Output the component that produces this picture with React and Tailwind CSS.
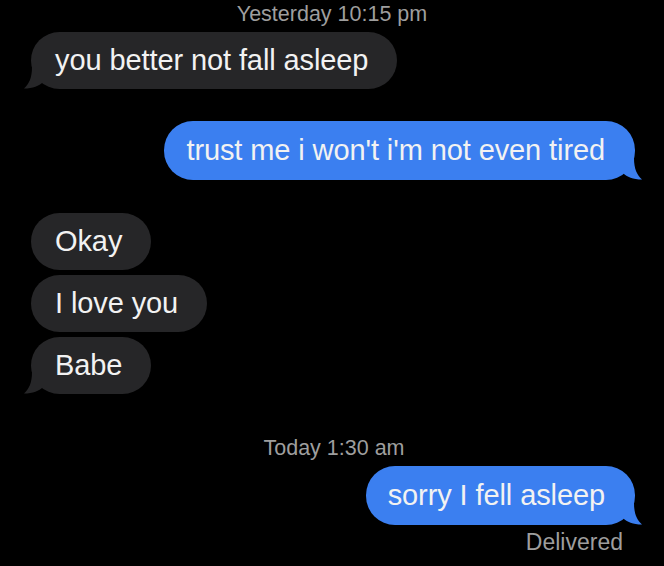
const font = { fontFamily: '"Liberation Sans", Arial, sans-serif' }

function TailLeft({ color }) {
  return (
    <svg className="absolute -left-[7px] bottom-0" width="22" height="22" viewBox="0 0 22 22">
      <path d="M8 0 C8 11 5 17 0 21.5 C9 21.5 15 19 19 15 L19 0 Z" fill={color} />
    </svg>
  )
}

function TailRight({ color }) {
  return (
    <svg className="absolute -right-[7px] bottom-0" width="22" height="22" viewBox="0 0 22 22">
      <path d="M14 0 C14 11 17 17 22 21.5 C13 21.5 7 19 3 15 L3 0 Z" fill={color} />
    </svg>
  )
}

function Received({ text, tail, className = '' }) {
  return (
    <div className={`relative self-start ml-[31px] rounded-[29px] bg-[#262628] pl-[24px] pr-[29px] py-[12px] text-[29px] leading-[33px] tracking-[-0.1px] text-[#f2f2f2] ${className}`}>
      {tail && <TailLeft color="#262628" />}
      <span className="relative">{text}</span>
    </div>
  )
}

function Sent({ text, className = '' }) {
  return (
    <div className={`relative self-end mr-[29px] rounded-[29px] bg-[#3b7ff0] pl-[22px] pr-[30px] py-[13px] text-[29px] leading-[33px] tracking-[-0.1px] text-[#f2f2f2] ${className}`}>
      <TailRight color="#3b7ff0" />
      <span className="relative">{text}</span>
    </div>
  )
}

export default function App() {
  return (
    <div className="flex h-[566px] w-[664px] flex-col overflow-hidden bg-black" style={font}>
      <div className="mt-[2px] text-center text-[21.5px] leading-[24px] text-[#9e9e9e]">
        Yesterday 10:15 pm
      </div>
      <Received text="you better not fall asleep" tail className="mt-[6px]" />
      <Sent text="trust me i won't i'm not even tired" className="mt-[32px]" />
      <Received text="Okay" className="mt-[33px]" />
      <Received text="I love you" className="mt-[5px]" />
      <Received text="Babe" tail className="mt-[5px]" />
      <div className="mt-[42px] pl-[4px] text-center text-[21.5px] leading-[24px] text-[#9e9e9e]">
        Today 1:30 am
      </div>
      <Sent text="sorry I fell asleep" className="mt-[6px]" />
      <div className="mt-[3px] mr-[41px] self-end text-[23px] leading-[28px] text-[#9e9e9e]">
        Delivered
      </div>
    </div>
  )
}
